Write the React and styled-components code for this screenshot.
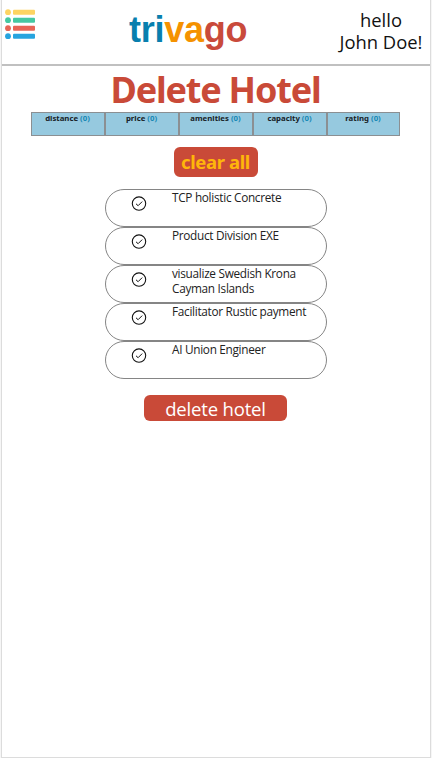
import React from "react";
import styled, { createGlobalStyle } from "styled-components";

const GlobalStyle = createGlobalStyle`
  * { box-sizing: border-box; }
  body { margin: 0; background: #f6f6f6; font-family: "Open Sans", "Noto Sans", sans-serif; }
`;

const Page = styled.div`
  width: 430px;
  height: 758px;
  margin-left: 1px;
  background: #fff;
  border: solid #dcdcdc;
  border-width: 0 1px 1px;
`;

const Header = styled.header`
  width: 100%;
  height: 66px;
  border-bottom: 2px solid #c0c0c0;
  display: grid;
  grid-template-columns: 126px 1fr 98px;
`;

const Content = styled.main`
  display: flex;
  flex-direction: column;
  align-items: center;
  padding-right: 1px;
`;

const MenuIcon = styled.svg`
  display: block;
  margin: 9px 0 0 3px;
`;

const Logo = styled.div`
  padding: 9px 0 0 1px;
  font: bold 36px/41px "Liberation Sans", Arial, sans-serif;
  letter-spacing: -0.25px;
`;

const LogoPart = styled.span`
  color: ${(p) => p.$color};
`;

const Greeting = styled.div`
  padding-top: 9px;
  text-align: center;
  white-space: nowrap;
  font-size: 18.4px;
  line-height: 22px;
  color: #111;
`;

const Title = styled.h1`
  margin: 0;
  height: 46px;
  font: bold 36px/47px "Noto Sans", sans-serif;
  letter-spacing: -1.2px;
  color: #c94a38;
  white-space: nowrap;
`;

const Filters = styled.nav`
  width: 369px;
  height: 24px;
  flex: none;
  display: grid;
  grid-template-columns: 74px 74px 74px 74px 1fr;
  border: 1px solid #8b8f92;
  background: #96c9df;
`;

const Filter = styled.div`
  display: flex;
  justify-content: center;
  gap: 2px;
  padding-right: 1px;
  border-right: 2px solid #8b8f92;
  font: bold 7.8px/11px "Noto Sans", sans-serif;
  color: #172126;
  white-space: nowrap;
  &:last-child { border-right: 0; }
`;

const Count = styled.span`
  color: #1688b5;
`;

const Button = styled.button`
  display: block;
  flex: none;
  border: 0;
  padding: 0;
  border-radius: 6px;
  background: #c94a38;
  white-space: nowrap;
`;

const ClearButton = styled(Button)`
  width: 84px;
  height: 30px;
  margin-top: 11px;
  font: bold 18.5px/28px "Noto Sans", sans-serif;
  letter-spacing: -0.4px;
  color: #ffb60a;
`;

const DeleteButton = styled(Button)`
  width: 143px;
  height: 26px;
  margin-top: 16px;
  padding-top: 1px;
  font: 18.5px/26px "Open Sans", sans-serif;
  letter-spacing: -0.17px;
  color: #fff;
`;

const HotelList = styled.ul`
  list-style: none;
  margin: 12px 0 0;
  padding: 0;
`;

const Hotel = styled.li`
  width: 222px;
  height: 38px;
  border: 1px solid #858585;
  border-radius: 19px;
  display: grid;
  grid-template-columns: 66px 1fr;
`;

const Check = styled.svg`
  display: block;
  margin: 6px 0 0 25px;
`;

const HotelName = styled.span`
  padding-left: 0.5px;
  font: 400 11.8px/15px "Open Sans", sans-serif;
  letter-spacing: -0.3px;
  color: #222;
  white-space: pre-line;
`;

const menuColors = ["#fdd462", "#46c8a2", "#e86456", "#27a4df"];
const filters = ["distance", "price", "amenities", "capacity", "rating"];
const hotels = [
  "TCP holistic Concrete",
  "Product Division EXE",
  "visualize Swedish Krona\nCayman Islands",
  "Facilitator Rustic payment",
  "AI Union Engineer",
];

export default function App() {
  return (
    <>
      <GlobalStyle />
      <Page>
        <Header>
          <MenuIcon width="31" height="31" viewBox="0 0 31 31">
            {menuColors.map((color, i) => (
              <g key={color} fill={color}>
                <circle cx="3" cy={3.2 + i * 8} r="2.9" />
                <rect x="8" y={0.7 + i * 8} width="22" height="5.1" rx="1" />
              </g>
            ))}
          </MenuIcon>
          <Logo>
            <LogoPart $color="#087fae">tri</LogoPart>
            <LogoPart $color="#f59200">va</LogoPart>
            <LogoPart $color="#c94a3b">go</LogoPart>
          </Logo>
          <Greeting>hello<br />John Doe!</Greeting>
        </Header>
        <Content>
          <Title>Delete Hotel</Title>
          <Filters>
            {filters.map((name) => (
              <Filter key={name}>
                <span>{name}</span>
                <Count>(0)</Count>
              </Filter>
            ))}
          </Filters>
          <ClearButton>clear all</ClearButton>
          <HotelList>
            {hotels.map((name) => (
              <Hotel key={name}>
                <Check width="16" height="16" viewBox="0 0 16 16" fill="none" stroke="#111">
                  <circle cx="8" cy="7.6" r="6.7" strokeWidth="1.1" />
                  <path d="M5 7.8 7.1 9.7 11.2 5.6" strokeWidth="1" />
                </Check>
                <HotelName>{name}</HotelName>
              </Hotel>
            ))}
          </HotelList>
          <DeleteButton>delete hotel</DeleteButton>
        </Content>
      </Page>
    </>
  );
}
